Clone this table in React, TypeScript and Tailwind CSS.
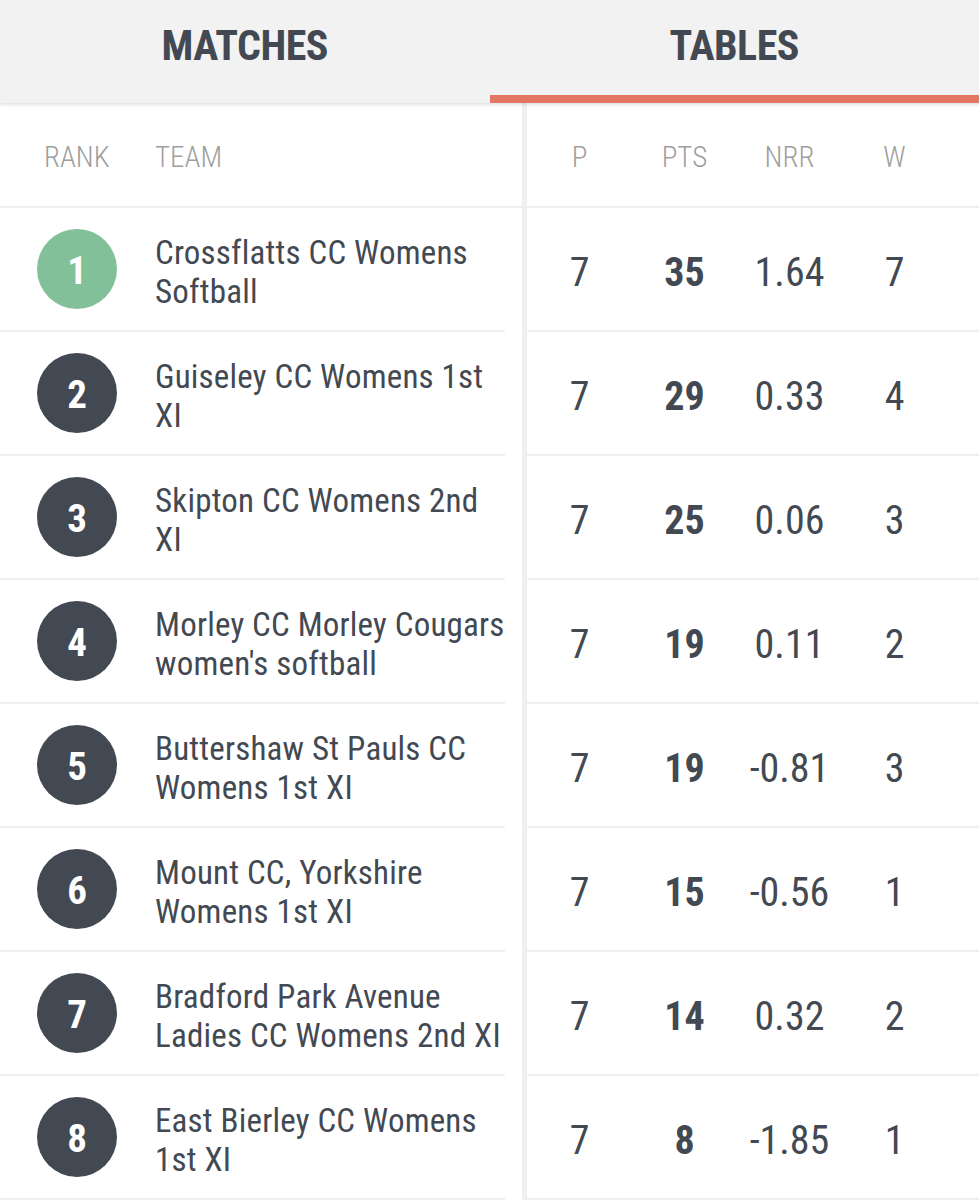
import React from 'react';

type Row = {
  rank: number;
  team: string[];
  p: number;
  pts: number;
  nrr: string;
  w: number;
};

const ROWS: Row[] = [
  { rank: 1, team: ['Crossflatts CC Womens', 'Softball'], p: 7, pts: 35, nrr: '1.64', w: 7 },
  { rank: 2, team: ['Guiseley CC Womens 1st', 'XI'], p: 7, pts: 29, nrr: '0.33', w: 4 },
  { rank: 3, team: ['Skipton CC Womens 2nd', 'XI'], p: 7, pts: 25, nrr: '0.06', w: 3 },
  { rank: 4, team: ['Morley CC Morley Cougars', "women's softball"], p: 7, pts: 19, nrr: '0.11', w: 2 },
  { rank: 5, team: ['Buttershaw St Pauls CC', 'Womens 1st XI'], p: 7, pts: 19, nrr: '-0.81', w: 3 },
  { rank: 6, team: ['Mount CC, Yorkshire', 'Womens 1st XI'], p: 7, pts: 15, nrr: '-0.56', w: 1 },
  { rank: 7, team: ['Bradford Park Avenue', 'Ladies CC Womens 2nd XI'], p: 7, pts: 14, nrr: '0.32', w: 2 },
  { rank: 8, team: ['East Bierley CC Womens', '1st XI'], p: 7, pts: 8, nrr: '-1.85', w: 1 },
];

const font = "font-['Roboto_Condensed','Roboto','Liberation_Sans',sans-serif] font-stretch-[75%]";

export default function App() {
  return (
    <div className={`w-[979px] h-[1200px] overflow-hidden bg-white text-[#434952] ${font}`}>
      {/* Tabs */}
      <div className="relative z-10 flex h-[103px] bg-[#f2f2f2] shadow-[0_2px_3px_rgba(0,0,0,0.12)]">
        <div className="flex flex-1 items-center justify-center pb-[12px]">
          <span className="text-[42px] font-bold tracking-[-0.5px]">MATCHES</span>
        </div>
        <div className="flex flex-1 items-center justify-center border-b-[8px] border-[#e27766] pb-[4px]">
          <span className="text-[42px] font-bold tracking-[-0.5px]">TABLES</span>
        </div>
      </div>

      {/* Header */}
      <div className="flex h-[105px] border-b-2 border-[#eeeeee]">
        <div className="flex w-[522px] items-center pt-[6px] text-[29px] font-light text-[#9e9e9e]">
          <span className="ml-[44px] w-[111px]">RANK</span>
          <span>TEAM</span>
        </div>
        <div className="w-[5px] bg-[#f0f0f0]" />
        <div className="flex flex-1 items-center pt-[6px] text-[29px] font-light text-[#9e9e9e]">
          <span className="w-[105px] text-center">P</span>
          <span className="w-[105px] text-center">PTS</span>
          <span className="w-[105px] text-center">NRR</span>
          <span className="w-[105px] text-center">W</span>
        </div>
      </div>

      {ROWS.map((r) => (
        <div key={r.rank} className="flex h-[124px]">
          <div className="w-[522px] pr-[17px]">
            <div className="flex h-full items-center border-b-2 border-[#eeeeee]">
              <div
                className={`ml-[37px] flex h-[80px] w-[80px] shrink-0 items-center justify-center rounded-full pt-[4px] text-[39px] font-bold text-white ${
                  r.rank === 1 ? 'bg-[#82c09a]' : 'bg-[#434952]'
                }`}
              >
                {r.rank}
              </div>
              <div className="ml-[38px] pt-[5px] text-[33px] leading-[39px] tracking-[0.2px] whitespace-nowrap">
                {r.team.map((line) => (
                  <div key={line}>{line}</div>
                ))}
              </div>
            </div>
          </div>
          <div className="w-[5px] bg-[#f0f0f0]" />
          <div className="flex flex-1 items-center border-b-2 border-[#eeeeee] pt-[7px] text-[40px]">
            <span className="w-[105px] text-center">{r.p}</span>
            <span className="w-[105px] text-center font-bold">{r.pts}</span>
            <span className="w-[105px] text-center">{r.nrr}</span>
            <span className="w-[105px] text-center">{r.w}</span>
          </div>
        </div>
      ))}
    </div>
  );
}
